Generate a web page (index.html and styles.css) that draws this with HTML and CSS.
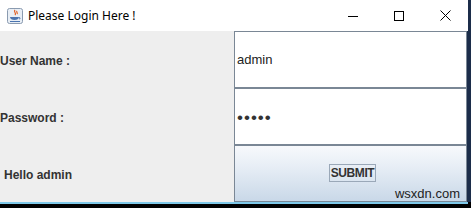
FILE: index.html
```html
<!DOCTYPE html>
<html lang="en">
<head>
    <meta charset="UTF-8">
    <title>Please Login Here !</title>
    <link rel="stylesheet" href="styles.css">
</head>
<body>
    <div class="window">
        <div class="titlebar">
            <span class="app-icon">
                <svg width="16" height="16" viewBox="0 0 16 16">
                    <rect x="0.5" y="0.5" width="15" height="15" rx="2" fill="#e8eef5" stroke="#8a9bb0"/>
                    <path d="M8 2c-2 2 2 3 0 5M10 3c-1 1 1 2 0 3" stroke="#e05a1c" stroke-width="1.2" fill="none"/>
                    <path d="M3 9h9c0 2-2 3-4.5 3S3 11 3 9z" fill="#4a74b0"/>
                    <path d="M12 9.5c1.5 0 1.5 1.5 0 1.5" stroke="#4a74b0" fill="none"/>
                    <path d="M3 13.5h10" stroke="#4a74b0"/>
                </svg>
            </span>
            <span class="title">Please Login Here !</span>
            <div class="controls">
                <span class="ctl">
                    <svg width="10" height="10" viewBox="0 0 10 10"><path d="M0 5.5h10" stroke="#000"/></svg>
                </span>
                <span class="ctl">
                    <svg width="10" height="10" viewBox="0 0 10 10"><rect x="0.5" y="0.5" width="9" height="9" fill="none" stroke="#000"/></svg>
                </span>
                <span class="ctl">
                    <svg width="11" height="11" viewBox="0 0 11 11"><path d="M0.5 0.5l10 10M10.5 0.5l-10 10" stroke="#000"/></svg>
                </span>
            </div>
        </div>
        <div class="content">
            <div class="label">User Name :</div>
            <div class="field">admin</div>
            <div class="label">Password :</div>
            <div class="field pass">&#8226;&#8226;&#8226;&#8226;&#8226;</div>
            <div class="label hello">Hello admin</div>
            <div class="btn-area">
                <span class="submit">SUBMIT</span>
                <span class="mark">wsxdn.com</span>
            </div>
        </div>
        <div class="bottom-line"></div>
    </div>
</body>
</html>
```

FILE: styles.css
```css
html, body {
    margin: 0;
    padding: 0;
    background: #000;
}
.window {
    width: 471px;
    height: 208px;
    background: #000;
    font-family: Tahoma, "DejaVu Sans", sans-serif;
    overflow: hidden;
}
.titlebar {
    height: 31px;
    background: #fff;
    display: flex;
    align-items: center;
    border-right: 3px solid #1c2d4a;
    box-sizing: border-box;
}
.app-icon {
    margin-left: 7px;
    width: 16px;
    height: 16px;
    display: flex;
}
.title {
    margin-left: 5px;
    font-family: "Noto Sans", "Open Sans", sans-serif;
    font-size: 12px;
    color: #000;
}
.controls {
    margin-left: auto;
    display: flex;
    height: 31px;
}
.ctl {
    width: 46px;
    display: flex;
    align-items: center;
    justify-content: center;
}
.content {
    display: grid;
    grid-template-columns: 234px 233px;
    grid-template-rows: 57px 57px 57px;
    background: #eeeeee;
    border-right: 4px solid #1c2d4a;
    width: 471px;
    box-sizing: border-box;
    height: 171px;
}
.label {
    display: flex;
    align-items: center;
    font-family: "Liberation Sans", Arial, sans-serif;
    font-weight: bold;
    font-size: 12px;
    color: #333;
    padding-top: 2px;
}
.hello {
    padding-left: 4px;
}
.field {
    background: #fff;
    border: 1px solid #7a8795;
    display: flex;
    align-items: center;
    padding-left: 2px;
    font-family: "Liberation Sans", Arial, sans-serif;
    font-size: 13px;
    color: #222;
}
.pass {
    font-size: 17px;
    letter-spacing: 1px;
    padding-top: 3px;
    color: #333;
}
.btn-area {
    position: relative;
    border: 1px solid #7a8795;
    background: linear-gradient(#f7f9fc, #e6edf5 40%, #c9d8e8);
    display: flex;
    align-items: center;
    justify-content: center;
}
.submit {
    border: 1px solid #9aa8b8;
    padding: 1px 1px;
    font-family: "Liberation Sans", Arial, sans-serif;
    font-weight: bold;
    font-size: 12px;
    color: #333;
    letter-spacing: -0.4px;
    margin-left: 4px;
    margin-top: -2px;
}
.mark {
    position: absolute;
    right: 6px;
    bottom: 0;
    font-family: "Liberation Sans", Arial, sans-serif;
    font-size: 13px;
    color: #222;
    line-height: 14px;
}
.bottom-line {
    height: 2px;
    background: #7ec8e8;
    width: 468px;
}
```
